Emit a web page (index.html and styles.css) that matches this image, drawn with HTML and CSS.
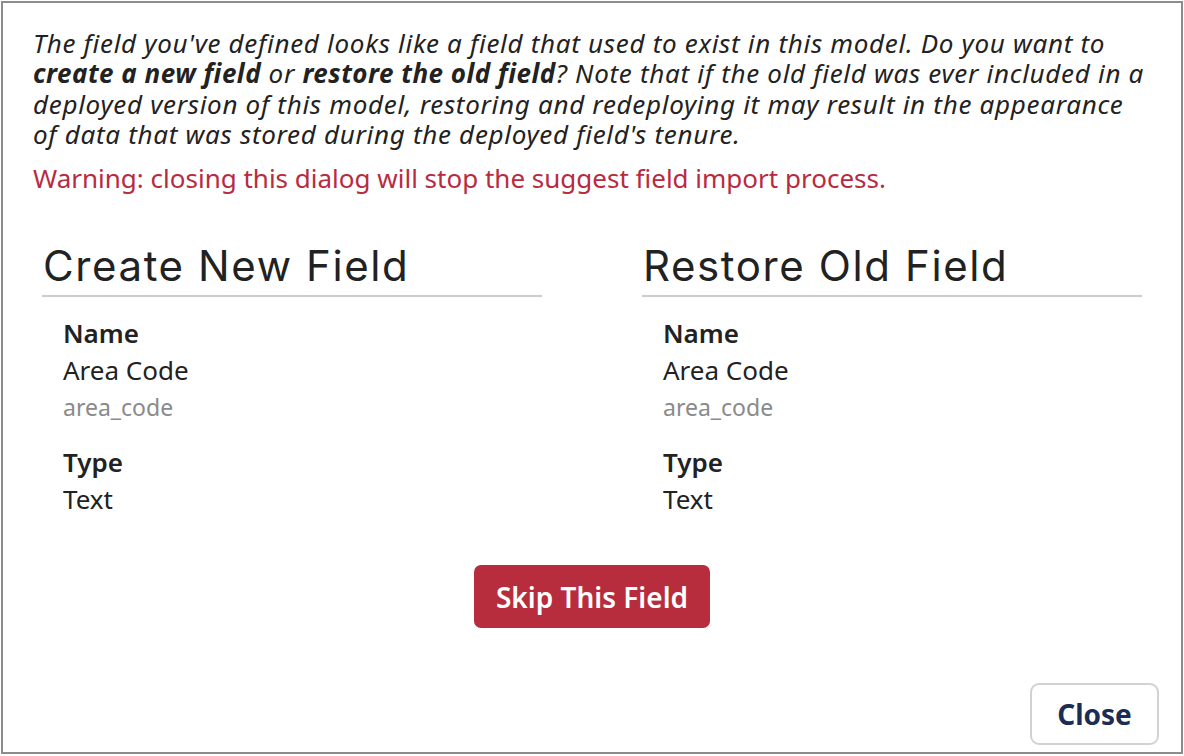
FILE: index.html
```html
<!DOCTYPE html>
<html lang="en">
<head>
<meta charset="utf-8">
<title>Suggested field</title>
<link rel="stylesheet" href="styles.css">
</head>
<body>
<div class="dialog">
  <div class="dialog-body">
    <p class="intro">The field you've defined looks like a field that used to exist in this model. Do you want to <b>create a new field</b> or <b>restore the old field</b>? Note that if the old field was ever included in a deployed version of this model, restoring and redeploying it may result in the appearance of data that was stored during the deployed field's tenure.</p>
    <p class="warning">Warning: closing this dialog will stop the suggest field import process.</p>

    <div class="options">
      <section class="option">
        <h2 class="option-title">Create New Field</h2>
        <dl class="props">
          <dt>Name</dt>
          <dd>Area Code</dd>
          <dd class="key">area_code</dd>
          <dt>Type</dt>
          <dd>Text</dd>
        </dl>
      </section>
      <section class="option">
        <h2 class="option-title">Restore Old Field</h2>
        <dl class="props">
          <dt>Name</dt>
          <dd>Area Code</dd>
          <dd class="key">area_code</dd>
          <dt>Type</dt>
          <dd>Text</dd>
        </dl>
      </section>
    </div>

    <div class="skip-row">
      <button class="btn-skip" type="button">Skip This Field</button>
    </div>
  </div>
  <div class="dialog-footer">
    <button class="btn-close" type="button">Close</button>
  </div>
</div>
</body>
</html>
```

FILE: styles.css
```css
html, body {
  margin: 0;
  padding: 0;
  background: #ffffff;
}

body {
  font-family: "Noto Sans", "Open Sans", sans-serif;
  color: #212121;
}

.dialog {
  box-sizing: border-box;
  width: 1182px;
  height: 753px;
  margin: 1px 0 0 1px;
  border: 2px solid #8c8c8c;
  background: #ffffff;
  display: flex;
  flex-direction: column;
}

.dialog-body {
  flex: 1;
  padding: 25px 30px 0 30px;
}

.intro {
  margin: 0;
  font-size: 26px;
  line-height: 30.3px;
  font-style: italic;
  letter-spacing: 0.7px;
  color: #222222;
}

.intro b {
  font-weight: 700;
  letter-spacing: 0.5px;
}

.warning {
  margin: 14px 0 0 0;
  font-size: 26px;
  line-height: 30px;
  color: #b82b3f;
}

.options {
  display: grid;
  grid-template-columns: 500px 500px;
  column-gap: 100px;
  margin: 49px 0 0 9px;
}

.option-title {
  margin: 0;
  padding: 0 0 5px 1px;
  border-bottom: 2px solid #cccccc;
  font-family: "Inter", "Lato", sans-serif;
  font-weight: 400;
  font-size: 42px;
  line-height: 48px;
  letter-spacing: 1.6px;
  color: #222222;
}

.props {
  margin: 21px 0 0 21px;
}

.props dt {
  font-size: 26px;
  line-height: 30px;
  font-weight: 600;
  color: #222222;
  margin: 0;
}

.props dd {
  margin: 8px 0 0 0;
  font-size: 26px;
  line-height: 30px;
  color: #222222;
}

.props dd.key {
  margin-top: 7px;
  font-size: 23px;
  color: #8a8a8a;
}

.props dd.key + dt {
  margin-top: 25px;
}

.props dt + dd {
  margin-top: 7px;
}

.skip-row {
  display: flex;
  justify-content: center;
  margin-top: 51px;
}

.btn-skip {
  font-family: "Noto Sans", sans-serif;
  font-size: 28px;
  font-weight: 600;
  color: #ffffff;
  background: #b72d3e;
  border: none;
  border-radius: 7px;
  width: 236px;
  height: 63px;
  padding: 0;
  cursor: pointer;
}

.dialog-footer {
  display: flex;
  justify-content: flex-end;
  padding: 0 22px 7px 0;
}

.btn-close {
  font-family: "Noto Sans", sans-serif;
  font-size: 28px;
  font-weight: 700;
  color: #1b2c55;
  background: #ffffff;
  border: 2px solid #d2d2d2;
  border-radius: 9px;
  width: 129px;
  height: 62px;
  padding: 0;
  cursor: pointer;
}
```
